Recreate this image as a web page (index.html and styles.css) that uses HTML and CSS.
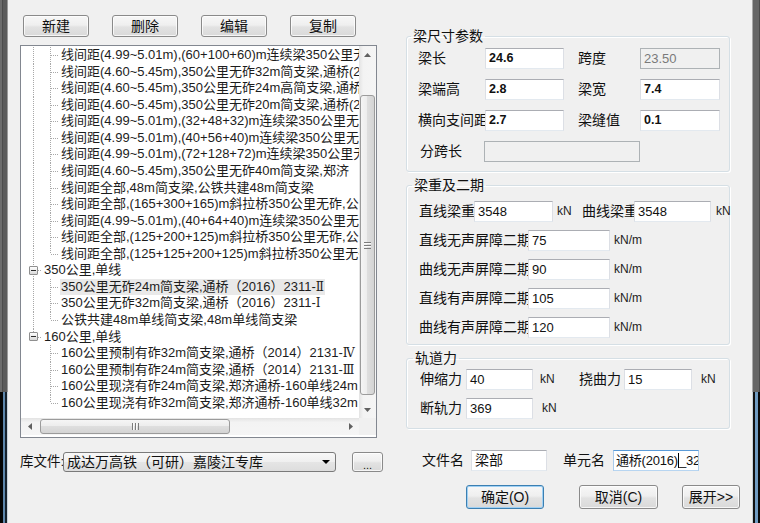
FILE: index.html
```html
<!DOCTYPE html>
<html>
<head>
<meta charset="utf-8">
<link rel="stylesheet" href="styles.css">
</head>
<body>
<div class="win">
  <div class="edge-l"></div>
  <div class="dlg">
    <div class="left">
      <div class="tools">
        <button class="btn tb">新建</button>
        <button class="btn tb">删除</button>
        <button class="btn tb">编辑</button>
        <button class="btn tb">复制</button>
      </div>
      <div class="tree">
        <div class="tree-body">
          <div class="r"><i class="v"></i><i class="t"></i><span>线间距(4.99~5.01m),(60+100+60)m连续梁350公里无砟</span></div>
          <div class="r"><i class="v"></i><i class="t"></i><span>线间距(4.60~5.45m),350公里无砟32m简支梁,通桥(2016)</span></div>
          <div class="r"><i class="v"></i><i class="t"></i><span>线间距(4.60~5.45m),350公里无砟24m高简支梁,通桥(2016)</span></div>
          <div class="r"><i class="v"></i><i class="t"></i><span>线间距(4.60~5.45m),350公里无砟20m简支梁,通桥(2016)</span></div>
          <div class="r"><i class="v"></i><i class="t"></i><span>线间距(4.99~5.01m),(32+48+32)m连续梁350公里无砟</span></div>
          <div class="r"><i class="v"></i><i class="t"></i><span>线间距(4.99~5.01m),(40+56+40)m连续梁350公里无砟</span></div>
          <div class="r"><i class="v"></i><i class="t"></i><span>线间距(4.99~5.01m),(72+128+72)m连续梁350公里无砟</span></div>
          <div class="r"><i class="v"></i><i class="t"></i><span>线间距(4.60~5.45m),350公里无砟40m简支梁,郑济</span></div>
          <div class="r"><i class="v"></i><i class="t"></i><span>线间距全部,48m简支梁,公铁共建48m简支梁</span></div>
          <div class="r"><i class="v"></i><i class="t"></i><span>线间距全部,(165+300+165)m斜拉桥350公里无砟,公铁</span></div>
          <div class="r"><i class="v"></i><i class="t"></i><span>线间距(4.99~5.01m),(40+64+40)m连续梁350公里无砟</span></div>
          <div class="r"><i class="v"></i><i class="t"></i><span>线间距全部,(125+200+125)m斜拉桥350公里无砟,公铁</span></div>
          <div class="r"><i class="v"></i><i class="e"></i><span>线间距全部,(125+125+200+125)m斜拉桥350公里无砟</span></div>
          <div class="r grp"><i class="gb full"><b class="box"></b></i><span>350公里,单线</span></div>
          <div class="r"><i class="v"></i><i class="t"></i><span class="sel">350公里无砟24m简支梁,通桥（2016）2311-<em class="rn">Ⅱ</em></span></div>
          <div class="r"><i class="v"></i><i class="t"></i><span>350公里无砟32m简支梁,通桥（2016）2311-<em class="rn">Ⅰ</em></span></div>
          <div class="r"><i class="v"></i><i class="e"></i><span>公铁共建48m单线简支梁,48m单线简支梁</span></div>
          <div class="r grp"><i class="gb half"><b class="box"></b></i><span>160公里,单线</span></div>
          <div class="r"><i class="n"></i><i class="t"></i><span>160公里预制有砟32m简支梁,通桥（2014）2131-<em class="rn">Ⅳ</em></span></div>
          <div class="r"><i class="n"></i><i class="t"></i><span>160公里预制有砟24m简支梁,通桥（2014）2131-<em class="rn">Ⅲ</em></span></div>
          <div class="r"><i class="n"></i><i class="t"></i><span>160公里现浇有砟24m简支梁,郑济通桥-160单线24m</span></div>
          <div class="r"><i class="n"></i><i class="e"></i><span>160公里现浇有砟32m简支梁,郑济通桥-160单线32m</span></div>
        </div>
        <div class="vs">
          <div class="arr"><svg width="7" height="4" viewBox="0 0 7 4"><path d="M0 4L3.5 0L7 4Z" fill="#606060"/></svg></div>
          <div class="vthumb"><span class="grip-h"></span></div>
          <div class="fill"></div>
          <div class="arr"><svg width="7" height="4" viewBox="0 0 7 4"><path d="M0 0L3.5 4L7 0Z" fill="#606060"/></svg></div>
        </div>
        <div class="hs">
          <div class="harr"><svg width="4" height="7" viewBox="0 0 4 7"><path d="M4 0L0 3.5L4 7Z" fill="#606060"/></svg></div>
          <div class="hthumb"><span class="grip-v"></span></div>
          <div class="fill"></div>
          <div class="harr"><svg width="4" height="7" viewBox="0 0 4 7"><path d="M0 0L4 3.5L0 7Z" fill="#606060"/></svg></div>
        </div>
        <div class="corner"></div>
      </div>
      <div class="lib">
        <span class="lib-label">库文件:</span>
        <div class="combo"><span>成达万高铁（可研）嘉陵江专库</span><svg class="drop" width="8" height="4" viewBox="0 0 8 4"><path d="M0 0L4 4L8 0Z" fill="#000"/></svg></div>
        <button class="btn dots">...</button>
      </div>
    </div>

    <div class="right">
      <fieldset class="grp g1">
        <legend>梁尺寸参数</legend>
        <div class="grid1">
          <div class="lb">梁长</div><div class="in b">24.6</div><div class="lb l2">跨度</div><div class="in dis">23.50</div>
          <div class="lb">梁端高</div><div class="in b">2.8</div><div class="lb l2">梁宽</div><div class="in b">7.4</div>
          <div class="lb">横向支间距</div><div class="in b">2.7</div><div class="lb l2">梁缝值</div><div class="in b">0.1</div>
          <div class="lb ind">分跨长</div><div class="in dis wide"></div>
        </div>
      </fieldset>

      <fieldset class="grp g2">
        <legend>梁重及二期</legend>
        <div class="row">
          <div class="lb w55">直线梁重</div><div class="in w79">3548</div><div class="u ml4 w25">kN</div>
          <div class="lb w52">曲线梁重</div><div class="in w77">3548</div><div class="u ml5">kN</div>
        </div>
        <div class="row"><div class="lb w109">直线无声屏障二期</div><div class="in w82">75</div><div class="u ml4">kN/m</div></div>
        <div class="row"><div class="lb w109">曲线无声屏障二期</div><div class="in w82">90</div><div class="u ml4">kN/m</div></div>
        <div class="row"><div class="lb w109">直线有声屏障二期</div><div class="in w82">105</div><div class="u ml4">kN/m</div></div>
        <div class="row"><div class="lb w109">曲线有声屏障二期</div><div class="in w82">120</div><div class="u ml4">kN/m</div></div>
      </fieldset>

      <fieldset class="grp g3">
        <legend>轨道力</legend>
        <div class="row">
          <div class="lb w46">伸缩力</div><div class="in w67">40</div><div class="u ml7 w39">kN</div>
          <div class="lb w45">挠曲力</div><div class="in w68">15</div><div class="u ml9">kN</div>
        </div>
        <div class="row">
          <div class="lb w46">断轨力</div><div class="in w67">369</div><div class="u ml9">kN</div>
        </div>
      </fieldset>

      <div class="file">
        <div class="lb w49">文件名</div><div class="in w76 cn">梁部</div>
        <div class="lb w50 ml16">单元名</div><div class="in w86 focus">通桥(2016)<span class="caret"></span>_32</div>
      </div>

      <div class="acts">
        <button class="btn act ok">确定(O)</button>
        <button class="btn act cancel">取消(C)</button>
        <button class="btn act more">展开&gt;&gt;</button>
      </div>
    </div>
  </div>
  <div class="edge-r"></div>
</div>
</body>
</html>
```

FILE: styles.css
```css
html, body {
  margin: 0;
  padding: 0;
}
body {
  width: 760px;
  height: 523px;
  overflow: hidden;
  font-family: "Liberation Sans", "Noto Sans CJK SC", sans-serif;
  color: #111;
  background: #f0f0f0;
}
.win {
  display: flex;
  width: 760px;
  height: 523px;
  overflow: hidden;
}
.edge-l {
  width: 8px;
  flex: none;
  background:
    linear-gradient(to right, #6c6c6c 0 2px, #4c4c4c 2px 3px, #5b5b5b 3px 7px, #9a9a9a 7px 8px) 0 0 / 8px 392px no-repeat,
    linear-gradient(to right, #050505 0 3px, #5d86ab 3px 5px, #16212b 5px 7px, #c9d3db 7px 8px) 0 392px / 8px 131px no-repeat;
}
.edge-r {
  width: 8px;
  flex: none;
  background:
    linear-gradient(to right, #a8a8a8 0 1px, #666 1px 7px, #4a4a4a 7px 8px) 0 0 / 8px 392px no-repeat,
    linear-gradient(to right, #c8d2da 0 1px, #101010 1px 3px, #6f9bc2 3px 6px, #0a0a0a 6px 8px) 0 392px / 8px 131px no-repeat;
}
.dlg {
  flex: 1;
  display: flex;
  background: #f0f0f0;
  padding: 15px 0 0 12px;
}

/* ---------- buttons ---------- */
.btn {
  box-sizing: border-box;
  margin: 0;
  padding: 0;
  border: 1px solid #8a8a8a;
  border-radius: 3px;
  background: linear-gradient(#f7f7f7, #efefef 45%, #e2e2e2 55%, #d9d9d9);
  box-shadow: inset 0 0 0 1px rgba(255, 255, 255, 0.75);
  font-family: "Liberation Sans", "Noto Sans CJK SC", sans-serif;
  font-size: 14px;
  color: #111;
  flex: none;
}

/* ---------- left column ---------- */
.left {
  width: 357px;
  flex: none;
  display: flex;
  flex-direction: column;
}
.tools {
  display: flex;
  gap: 23px;
  padding-left: 3px;
}
.tb {
  width: 66px;
  height: 22px;
  line-height: 20px;
}
.tree {
  margin-top: 8px;
  height: 393px;
  box-sizing: border-box;
  border: 1px solid #828790;
  background: #fff;
  display: grid;
  grid-template-columns: 338px 17px;
  grid-template-rows: 372px 17px;
  padding-bottom: 2px;
}
.tree-body {
  overflow: hidden;
  padding-top: 1px;
  font-size: 13px;
  color: #1c1c1c;
}
.r {
  display: flex;
  height: 16.57px;
  line-height: 16.57px;
  white-space: nowrap;
  padding-left: 4px;
}
.r i {
  flex: none;
  width: 17px;
  height: 100%;
}
.r span {
  margin-left: 1px;
  padding: 0 1px;
}
.r span.sel {
  background: #e9e9e9;
}
.rn {
  font-style: normal;
  font-family: "DejaVu Serif", "Noto Sans CJK SC", serif;
  font-size: 12px;
}
.v {
  background: repeating-linear-gradient(to bottom, #a8a8a8 0 1px, transparent 1px 2px) 8px 0 / 1px 100% no-repeat;
}
.t {
  background:
    repeating-linear-gradient(to bottom, #a8a8a8 0 1px, transparent 1px 2px) 8px 0 / 1px 100% no-repeat,
    repeating-linear-gradient(to right, #a8a8a8 0 1px, transparent 1px 2px) 9px 8px / 8px 1px no-repeat;
}
.e {
  background:
    repeating-linear-gradient(to bottom, #a8a8a8 0 1px, transparent 1px 2px) 8px 0 / 1px 8px no-repeat,
    repeating-linear-gradient(to right, #a8a8a8 0 1px, transparent 1px 2px) 9px 8px / 8px 1px no-repeat;
}
.gb {
  display: flex;
  align-items: center;
  padding-left: 4px;
  box-sizing: border-box;
}
.gb.full {
  background:
    repeating-linear-gradient(to bottom, #a8a8a8 0 1px, transparent 1px 2px) 8px 0 / 1px 100% no-repeat,
    repeating-linear-gradient(to right, #a8a8a8 0 1px, transparent 1px 2px) 13px 8px / 4px 1px no-repeat;
}
.gb.half {
  background:
    repeating-linear-gradient(to bottom, #a8a8a8 0 1px, transparent 1px 2px) 8px 0 / 1px 5px no-repeat,
    repeating-linear-gradient(to right, #a8a8a8 0 1px, transparent 1px 2px) 13px 8px / 4px 1px no-repeat;
}
.box {
  width: 9px;
  height: 9px;
  box-sizing: border-box;
  border: 1px solid #8f8f8f;
  border-radius: 1px;
  background:
    linear-gradient(#2b2b2b, #2b2b2b) 1px 3px / 5px 1px no-repeat,
    linear-gradient(#ffffff, #d8d8d8);
}
.grp span {
  margin-left: 1px;
}

/* scrollbars */
.vs {
  display: flex;
  flex-direction: column;
  background: linear-gradient(to right, #e3e3e3, #f3f3f3 25%, #f5f5f5);
}
.arr {
  height: 17px;
  flex: none;
  display: flex;
  align-items: center;
  justify-content: center;
}
.fill {
  flex: 1;
}
.vthumb {
  margin: 32px 1px 0 1px;
  height: 300px;
  flex: none;
  box-sizing: border-box;
  border: 1px solid #9b9b9b;
  border-radius: 3px;
  background: linear-gradient(to right, #f5f5f5, #ececec 50%, #dedede 50%, #d4d4d4);
  display: flex;
  align-items: center;
  justify-content: center;
}
.grip-h {
  width: 7px;
  height: 7px;
  background: repeating-linear-gradient(to bottom, #7c7c7c 0 1px, #fafafa 1px 2px, transparent 2px 3px);
}
.hs {
  display: flex;
  align-items: center;
  background: linear-gradient(to bottom, #e3e3e3, #f3f3f3 25%, #f5f5f5);
}
.harr {
  width: 17px;
  height: 17px;
  flex: none;
  display: flex;
  align-items: center;
  justify-content: center;
}
.hthumb {
  margin-left: 2px;
  width: 190px;
  height: 15px;
  flex: none;
  box-sizing: border-box;
  border: 1px solid #9b9b9b;
  border-radius: 3px;
  background: linear-gradient(to bottom, #f5f5f5, #ececec 50%, #dedede 50%, #d4d4d4);
  display: flex;
  align-items: center;
  justify-content: center;
}
.grip-v {
  width: 7px;
  height: 7px;
  background: repeating-linear-gradient(to right, #7c7c7c 0 1px, #fafafa 1px 2px, transparent 2px 3px);
}
.corner {
  background: #f0f0f0;
}

/* library row */
.lib {
  display: flex;
  align-items: center;
  margin-top: 14px;
  height: 20px;
}
.lib-label {
  width: 43px;
  flex: none;
  font-size: 13.5px;
  line-height: 20px;
  white-space: nowrap;
}
.combo {
  width: 273px;
  height: 20px;
  flex: none;
  box-sizing: border-box;
  border: 1px solid #7a7a7a;
  border-radius: 3px;
  background: linear-gradient(#f8f8f8, #efefef 50%, #e5e5e5 50%, #dddddd);
  display: flex;
  align-items: center;
  padding-left: 3px;
  font-size: 14px;
  line-height: 18px;
  white-space: nowrap;
}
.drop {
  margin-left: auto;
  margin-right: 5px;
}
.dots {
  width: 31px;
  height: 20px;
  margin-left: 16px;
  font-size: 11px;
  line-height: 18px;
  padding-top: 3px;
}

/* ---------- right column ---------- */
.right {
  margin-left: 29px;
  padding-top: 13px;
  width: 334px;
  flex: none;
  display: flex;
  flex-direction: column;
}
fieldset.grp {
  margin: 0;
  width: 324px;
  min-width: 0;
  box-sizing: border-box;
  border: 1px solid #d5dfe5;
  border-radius: 3px;
  box-shadow: inset 1px 1px 0 #ffffff, 1px 1px 0 #ffffff;
}
legend {
  padding: 0 2px;
  margin-left: -7px;
  font-size: 14px;
  line-height: 16px;
  color: #111;
}
.g1 {
  padding: 4px 9px 9px 11px;
}
.g2 {
  margin-top: 5px !important;
  padding: 8px 9px 6px 12px;
}
.g3 {
  margin-top: 5px !important;
  padding: 3px 9px 9px 13px;
}
.grid1 {
  display: grid;
  grid-template-columns: 67px 79px 76px 80px;
  grid-auto-rows: 21px;
  row-gap: 10px;
  align-items: center;
}
.lb {
  font-size: 14px;
  line-height: 21px;
  white-space: nowrap;
  overflow: hidden;
  flex: none;
}
.l2 {
  padding-left: 14px;
}
.ind {
  padding-left: 2px;
}
.in {
  height: 21px;
  box-sizing: border-box;
  border: 1px solid;
  border-color: #abadb3 #dcdfe5 #e3e9ef #dcdfe5;
  background: #fff;
  font-size: 13px;
  line-height: 19px;
  padding-left: 3px;
  white-space: nowrap;
  overflow: hidden;
  flex: none;
  color: #111;
}
.in.b {
  font-weight: bold;
  font-size: 12.5px;
}
.in.dis {
  background: #f0f0f0;
  border-color: #adb2b5;
  color: #7a7a7a;
}
.in.wide {
  grid-column: span 2;
  margin-left: -1px;
}
.in.cn {
  font-size: 14px;
}
.in.focus {
  border-color: #5a9bd8 #a9cbec #b7d5f1 #a9cbec;
  padding-left: 2px;
  letter-spacing: -0.2px;
}
.caret {
  display: inline-block;
  width: 1px;
  height: 15px;
  background: #000;
  vertical-align: -3px;
}
.row {
  display: flex;
  align-items: center;
  height: 21px;
}
.row + .row {
  margin-top: 8px;
}
.u {
  font-size: 12px;
  line-height: 21px;
  flex: none;
  color: #222;
}
.w25 { width: 25px; }
.w39 { width: 39px; }
.w45 { width: 45px; }
.w46 { width: 46px; }
.w49 { width: 49px; }
.w50 { width: 50px; }
.w52 { width: 52px; }
.w55 { width: 55px; }
.w67 { width: 67px; }
.w68 { width: 68px; }
.w76 { width: 76px; }
.w77 { width: 77px; }
.w79 { width: 79px; }
.w82 { width: 82px; }
.w86 { width: 86px; }
.w109 { width: 109px; }
.ml4 { margin-left: 4px; }
.ml5 { margin-left: 5px; }
.ml7 { margin-left: 7px; }
.ml9 { margin-left: 9px; }
.ml16 { margin-left: 16px; }

.file {
  display: flex;
  align-items: center;
  margin-top: 21px;
  padding-left: 16px;
  height: 21px;
}
.acts {
  display: flex;
  margin-top: 14px;
  padding-left: 60px;
}
.act {
  height: 24px;
  line-height: 22px;
}
.ok {
  width: 78px;
  border-color: #3c7fb1;
  box-shadow: inset 0 0 0 1px #9fd0f4;
}
.cancel {
  width: 79px;
  margin-left: 35px;
}
.more {
  width: 58px;
  margin-left: 24px;
}
```
